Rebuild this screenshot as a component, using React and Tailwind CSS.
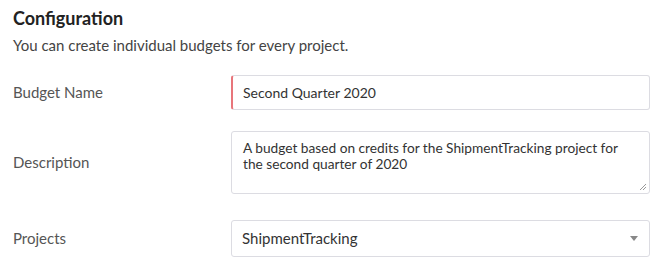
import React from 'react'

const font = { fontFamily: 'Lato, "Open Sans", sans-serif' }

function Label({ children, className = '' }) {
  return <div className={`text-[15px] text-[#555] ${className}`}>{children}</div>
}

export default function App() {
  return (
    <div className="w-[669px] h-[279px] bg-white overflow-hidden px-[13px] pt-[7px]" style={font}>
      <h2 className="text-[18px] font-bold text-[#222] leading-[22px]">Configuration</h2>
      <p className="text-[15px] text-[#444] leading-[18px] mt-[7px]">You can create individual budgets for every project.</p>

      <div className="grid grid-cols-[218px_419px] gap-y-[21px] mt-[21px] items-center">
        <Label>Budget Name</Label>
        <div className="h-[35px] rounded-[3px] border border-[#dcdce2] border-l-2 border-l-[#e8757b] flex items-center pl-[10px] text-[14px] text-[#333]">
          Second Quarter 2020
        </div>

        <Label>Description</Label>
        <div className="relative h-[63px] rounded-[3px] border border-[#dcdce2] pl-[11px] pt-[8px] text-[13.7px] leading-[16px] text-[#333]">
          A budget based on credits for the ShipmentTracking project for
          <br />
          the second quarter of 2020
          <svg className="absolute right-[2px] bottom-[2px]" width="8" height="8" viewBox="0 0 8 8">
            <path d="M7 1L1 7M7 4L4 7" stroke="#999" strokeWidth="1" />
          </svg>
        </div>

        <Label className="mt-[5px]">Projects</Label>
        <div className="mt-[5px] h-[37px] rounded-[3px] border border-[#dcdce2] flex items-center pl-[10px] pr-[11px] text-[15px] text-[#333]">
          <span className="flex-1">ShipmentTracking</span>
          <svg width="8" height="5" viewBox="0 0 8 5">
            <path d="M0 0H8L4 5Z" fill="#888" />
          </svg>
        </div>
      </div>
    </div>
  )
}
